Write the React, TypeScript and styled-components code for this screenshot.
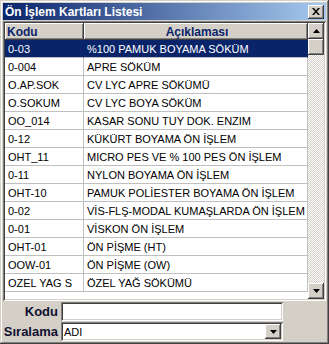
import React from "react";
import styled, { createGlobalStyle } from "styled-components";

const GlobalStyle = createGlobalStyle`
  html, body {
    margin: 0;
    padding: 0;
    background: #d4d0c8;
  }
  * {
    box-sizing: border-box;
  }
`;

const FACE = "#d4d0c8";
const SHADOW = "#808080";
const DARK = "#404040";
const NAVY = "#0a246a";

const Window = styled.div`
  width: 329px;
  height: 344px;
  background: ${FACE};
  padding: 3px;
  display: flex;
  flex-direction: column;
  font-family: "Liberation Sans", Arial, sans-serif;
  box-shadow: inset -1px -1px ${DARK}, inset 1px 1px ${FACE}, inset -2px -2px ${SHADOW}, inset 2px 2px #fff;
`;

const TitleBar = styled.div`
  height: 17px;
  display: flex;
  align-items: center;
  justify-content: space-between;
  padding: 0 2px 0 2px;
  background: linear-gradient(to right, ${NAVY}, #a6caf0);
  color: #fff;
  font-weight: bold;
  font-size: 12px;
  margin-bottom: 1px;
`;

const CloseButton = styled.div`
  width: 16px;
  height: 14px;
  background: ${FACE};
  display: flex;
  align-items: center;
  justify-content: center;
  box-shadow: inset -1px -1px ${DARK}, inset 1px 1px #fff, inset -2px -2px ${SHADOW};
`;

const Grid = styled.div`
  height: 280px;
  display: flex;
  padding: 2px;
  background: #fff;
  box-shadow: inset 1px 1px ${SHADOW}, inset -1px -1px #fff, inset 2px 2px ${DARK}, inset -2px -2px ${FACE};
`;

const Table = styled.div`
  flex: 1;
  display: flex;
  flex-direction: column;
  background: #fff;
  overflow: hidden;
`;

const Row = styled.div<{ $selected?: boolean }>`
  display: grid;
  grid-template-columns: 79px 1fr;
  height: 18px;
  font-size: 11px;
  background: ${({ $selected }) => ($selected ? NAVY : "#fff")};
  color: ${({ $selected }) => ($selected ? "#fff" : "#000")};
`;

const Cell = styled.div<{ $selected?: boolean }>`
  display: flex;
  align-items: center;
  padding-left: 3px;
  white-space: nowrap;
  overflow: hidden;
  border-right: 1px solid ${({ $selected }) => ($selected ? NAVY : "#c0c0c0")};
  border-bottom: 1px solid #c0c0c0;
`;

const HeaderRow = styled.div`
  display: grid;
  grid-template-columns: 79px 1fr;
  height: 17px;
`;

const HeaderCell = styled.div<{ $center?: boolean }>`
  display: flex;
  align-items: center;
  justify-content: ${({ $center }) => ($center ? "center" : "flex-start")};
  padding-left: 2px;
  background: ${FACE};
  color: ${NAVY};
  font-weight: bold;
  font-size: 12px;
  box-shadow: inset -1px -1px ${DARK}, inset 1px 1px #fff, inset -2px -2px ${SHADOW};
`;

const ScrollBar = styled.div`
  width: 16px;
  display: flex;
  flex-direction: column;
  background: repeating-conic-gradient(#fff 0 25%, ${FACE} 0 50%) 0 0 / 2px 2px;
`;

const ScrollButton = styled.div`
  width: 16px;
  height: 16px;
  background: ${FACE};
  display: flex;
  align-items: center;
  justify-content: center;
  box-shadow: inset -1px -1px ${DARK}, inset 1px 1px #fff, inset -2px -2px ${SHADOW};
`;

const Track = styled.div`
  flex: 1;
`;

const Form = styled.div`
  display: grid;
  grid-template-columns: 55px 222px;
  column-gap: 3px;
  row-gap: 1px;
  margin-top: 1px;
  align-items: center;
`;

const Label = styled.div`
  text-align: right;
  font-weight: bold;
  font-size: 13px;
  color: #101030;
  white-space: nowrap;
`;

const Field = styled.div`
  height: 19px;
  background: #fff;
  display: flex;
  align-items: center;
  justify-content: space-between;
  padding: 2px 2px 2px 3px;
  font-size: 11px;
  box-shadow: inset 1px 1px ${SHADOW}, inset -1px -1px #fff, inset 2px 2px ${DARK}, inset -2px -2px ${FACE};
`;

const DropButton = styled(ScrollButton)`
  height: 15px;
`;

const Arrow = ({ down }: { down?: boolean }) => (
  <svg width="7" height="4" viewBox="0 0 7 4">
    <path d={down ? "M0 0h7L3.5 4z" : "M0 4h7L3.5 0z"} fill="#000" />
  </svg>
);

const rows: [string, string][] = [
  ["0-03", "%100 PAMUK BOYAMA SÖKÜM"],
  ["0-004", "APRE SÖKÜM"],
  ["O.AP.SOK", "CV LYC APRE SÖKÜMÜ"],
  ["O.SOKUM", "CV LYC BOYA SÖKÜM"],
  ["OO_014", "KASAR SONU TUY DOK. ENZIM"],
  ["0-12", "KÜKÜRT BOYAMA ÖN İŞLEM"],
  ["OHT_11", "MICRO PES VE % 100 PES  ÖN İŞLEM"],
  ["0-11", "NYLON BOYAMA ÖN İŞLEM"],
  ["OHT-10", "PAMUK POLİESTER BOYAMA ÖN İŞLEM"],
  ["0-02", "VİS-FLŞ-MODAL KUMAŞLARDA ÖN İŞLEM"],
  ["0-01", "VİSKON ÖN İŞLEM"],
  ["OHT-01", "ÖN PİŞME (HT)"],
  ["OOW-01", "ÖN PİŞME (OW)"],
  ["OZEL YAG S", "ÖZEL YAĞ SÖKÜMÜ"],
];

export default function App() {
  return (
    <>
      <GlobalStyle />
      <Window>
        <TitleBar>
          <span>Ön İşlem Kartları Listesi</span>
          <CloseButton>
            <svg width="8" height="7" viewBox="0 0 8 7">
              <path d="M0 0h2l2 2.5L6 0h2L5 3.5 8 7H6L4 4.5 2 7H0l3-3.5z" fill="#000" />
            </svg>
          </CloseButton>
        </TitleBar>
        <Grid>
          <Table>
            <HeaderRow>
              <HeaderCell>Kodu</HeaderCell>
              <HeaderCell $center>Açıklaması</HeaderCell>
            </HeaderRow>
            {rows.map(([code, desc], i) => (
              <Row key={code} $selected={i === 0}>
                <Cell $selected={i === 0}>{code}</Cell>
                <Cell $selected={i === 0}>{desc}</Cell>
              </Row>
            ))}
          </Table>
          <ScrollBar>
            <ScrollButton>
              <Arrow />
            </ScrollButton>
            <ScrollButton />
            <Track />
            <ScrollButton>
              <Arrow down />
            </ScrollButton>
          </ScrollBar>
        </Grid>
        <Form>
          <Label>Kodu</Label>
          <Field />
          <Label>Sıralama</Label>
          <Field>
            <span>ADI</span>
            <DropButton>
              <Arrow down />
            </DropButton>
          </Field>
        </Form>
      </Window>
    </>
  );
}
